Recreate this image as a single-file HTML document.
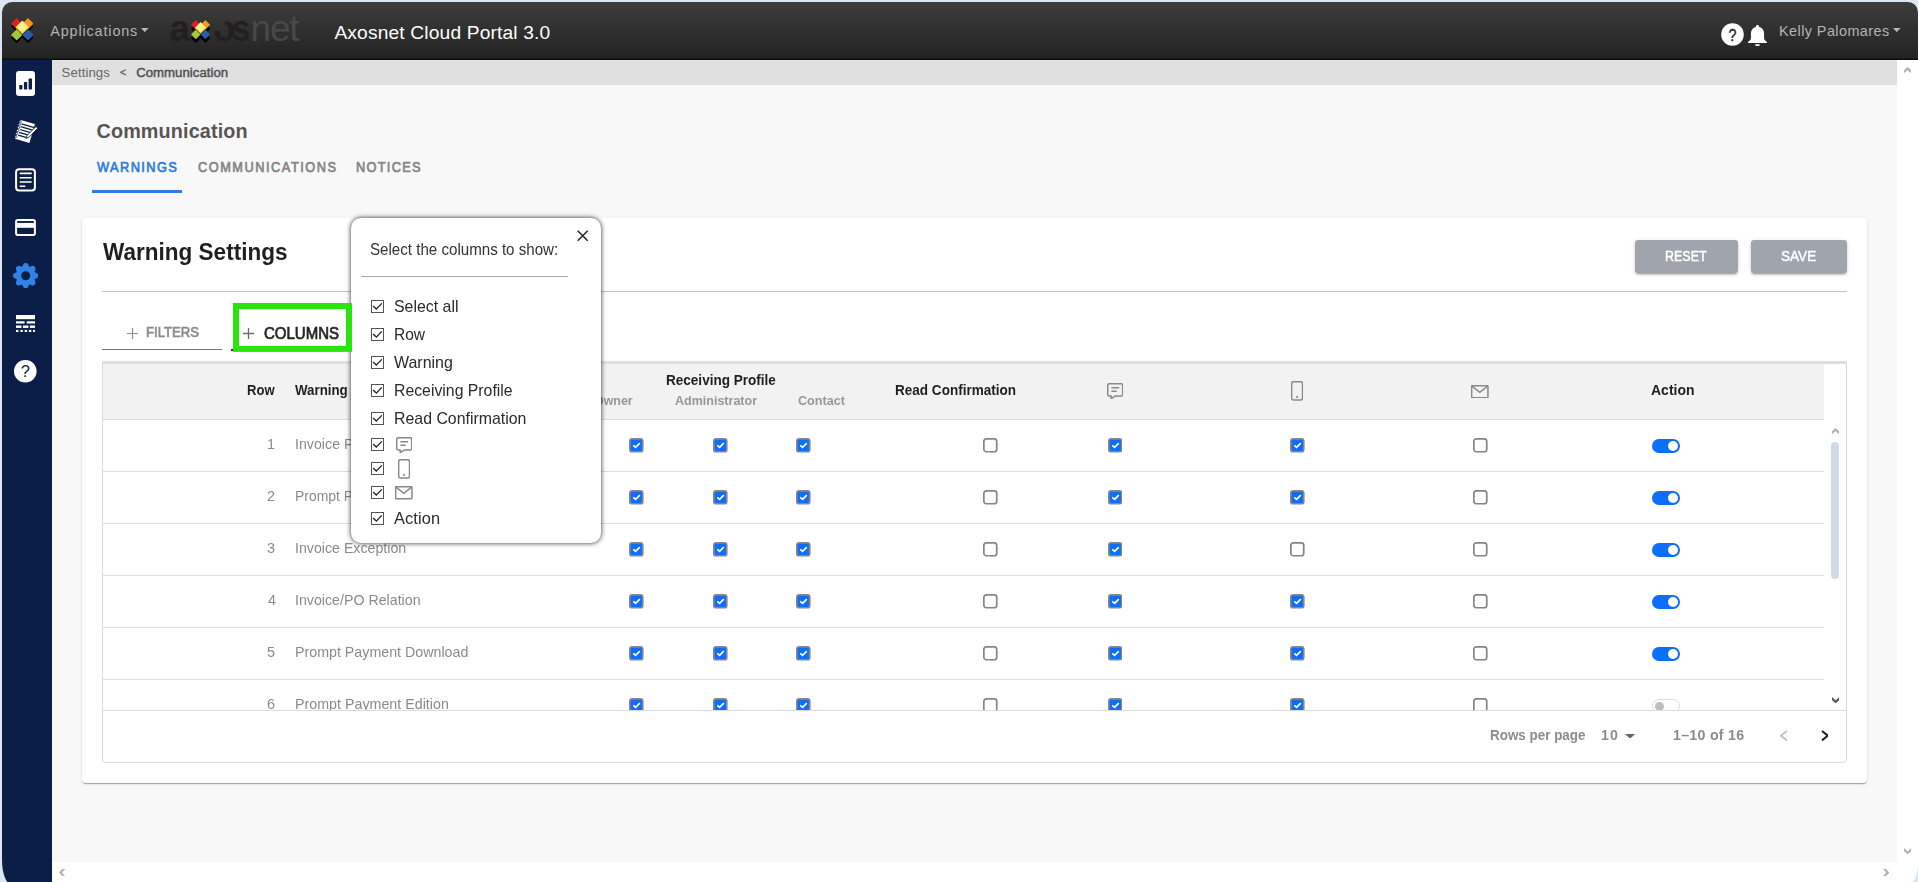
<!DOCTYPE html>
<html lang="en">
<head>
<meta charset="utf-8">
<title>Axosnet Cloud Portal 3.0</title>
<style>
*{box-sizing:border-box;margin:0;padding:0}
html,body{width:1918px;height:882px;overflow:hidden;background:#dce6f2;font-family:"Liberation Sans",sans-serif}
#win{position:absolute;left:2px;top:2px;width:1916px;height:882px;border-radius:10px 10px 9px 9px/10px 10px 24px 24px;overflow:hidden;background:#f8f8f8}
#page{position:absolute;left:-2px;top:-2px;width:1918px;height:882px}
.abs{position:absolute}
i{display:block}
#topbar{position:absolute;left:0;top:0;width:1918px;height:60px;background:linear-gradient(#3d3d3d 3%,#232323 97%,#0c0c0c 98%)}
#side{position:absolute;left:0;top:60px;width:52px;height:822px;background:#0b1e47}
#crumb{position:absolute;left:52px;top:60px;width:1845px;height:25px;background:#e0e0e0}
#vscroll{position:absolute;left:1897px;top:60px;width:21px;height:802px;background:#fff}
#hscroll{position:absolute;left:52px;top:862px;width:1866px;height:20px;background:#fff}
.t{position:absolute;white-space:nowrap;line-height:1;transform-origin:0 0}
.g{will-change:transform}
.s{display:inline-block;transform-origin:0 0}
#card{position:absolute;left:82px;top:218px;width:1785px;height:565px;background:#fff;border-radius:4px;box-shadow:0 2px 1px -1px rgba(0,0,0,.2),0 1px 1px 0 rgba(0,0,0,.14),0 1px 3px 0 rgba(0,0,0,.12)}
.btn{position:absolute;top:240px;height:32.600px;background:#a0a5ad;border-radius:3px;box-shadow:0 3px 1px -2px rgba(0,0,0,.2),0 2px 2px 0 rgba(0,0,0,.14),0 1px 5px 0 rgba(0,0,0,.12)}
#tbl{position:absolute;left:102px;top:361px;width:1745px;height:402px;border:1px solid #dcdcdc;border-radius:4px;background:#fff}
#thead{position:absolute;left:102px;top:361px;width:1722px;height:59px;background:#f2f2f2;border-top:3px solid #e0e0e0;border-bottom:1px solid #dcdcdc;border-left:1px solid #dcdcdc}
#tfoot{position:absolute;left:103px;top:710px;width:1743px;height:1px;background:#dcdcdc}
.hl{position:absolute;left:103px;width:1721px;height:1px;background:#dcdcdc}
#tbody{position:absolute;left:0;top:0;width:1918px;height:710px;overflow:hidden}
.sw{position:absolute;width:28px;height:14px;border-radius:7px;background:#0d6efd}
.sw::after{content:"";position:absolute;right:2px;top:2px;width:10px;height:10px;border-radius:50%;background:#fff}
.sw.off{background:#fff;border:1px solid #dcdcdc}
.sw.off::after{right:auto;left:1.500px;top:1.500px;width:9px;height:9px;background:#bdbdbd}
#pop{position:absolute;left:351px;top:217.700px;width:250px;height:325.300px;background:#fff;border-radius:10px;box-shadow:0 0 5px rgba(0,0,0,.85)}
</style>
</head>
<body>
<div id="win">
<div id="page">
<div id="topbar"></div>
<div id="side"></div>
<div id="crumb"></div>
<div id="vscroll"></div>
<div id="hscroll"></div>
<svg class="abs" style="left:10.8px;top:17.8px" width="22.6" height="25.31" viewBox="0 0 100 112">
<g transform="translate(0,12)"><path d="M25 0 50 25 75 0 100 25 75 50 100 75 75 100 50 75 25 100 0 75 25 50 0 25Z" fill="#000"/></g>
<path d="M25 0 50 25 25 50 0 25Z" fill="#dd1f26"/><path d="M75 0 100 25 75 50 50 25Z" fill="#f6961d"/>
<path d="M25 50 50 75 25 100 0 75Z" fill="#a3c83a"/><path d="M75 50 100 75 75 100 50 75Z" fill="#2a5caa"/>
<path d="M50 12 80 42 50 72 20 42Z" fill="#f3d630"/><path d="M50 12 76 38 50 62 24 38Z" fill="#fdf08a"/>
</svg>
<span class="t" style="left:50.3px;top:23.8px;font-size:14.4px;letter-spacing:0.855px;color:#b4b4b4">Applications</span>
<svg class="abs" style="left:141px;top:28px" width="7.6" height="4.2" viewBox="0 0 7.6 4.2"><path d="M0 0H7.6L3.8 4.2Z" fill="#b4b4b4"/></svg>
<span class="t" style="left:169.5px;top:9.5px;font-size:37px;font-weight:700;color:#231f20;letter-spacing:-1px">a</span>
<svg class="abs" style="left:190.8px;top:19.9px" width="19.2" height="23.04" viewBox="0 0 100 120">
<g transform="translate(0,20)"><path d="M25 0 50 25 75 0 100 25 75 50 100 75 75 100 50 75 25 100 0 75 25 50 0 25Z" fill="#000"/></g>
<path d="M25 0 50 25 25 50 0 25Z" fill="#dd1f26"/><path d="M75 0 100 25 75 50 50 25Z" fill="#f6961d"/>
<path d="M25 50 50 75 25 100 0 75Z" fill="#a3c83a"/><path d="M75 50 100 75 75 100 50 75Z" fill="#2a5caa"/>
<path d="M50 12 80 42 50 72 20 42Z" fill="#f3d630"/><path d="M50 12 76 38 50 62 24 38Z" fill="#fdf08a"/>
</svg>
<span class="t" style="left:213px;top:9.500px;font-size:37px;font-weight:700;color:#231f20;clip-path:polygon(0 58%,52% 58%,52% 0,100% 0,100% 100%,0 100%)">o</span>
<span class="t" style="left:231.500px;top:9.500px;font-size:37px;font-weight:700;color:#231f20;transform:scaleX(.88)">s</span>
<span class="t" style="left:250.5px;top:9.5px;font-size:37px;color:#4a4747;letter-spacing:-1.2px">net</span>
<span class="t" style="left:334.4px;top:22.9px;font-size:19.2px;letter-spacing:0.157px;color:#ffffff">Axosnet Cloud Portal 3.0</span>
<svg class="abs" style="left:1721px;top:23px" width="23" height="23" viewBox="0 0 23 23"><circle cx="11.5" cy="11.5" r="11.3" fill="#fff"/><text x="11.500" y="17.700" text-anchor="middle" transform="translate(11.500 0) scale(.84 1) translate(-11.500 0)" font-family="Liberation Sans,sans-serif" font-size="17" fill="#222" stroke="#222" stroke-width=".35">?</text></svg>
<svg class="abs" style="left:1748.100px;top:24.700px" width="19" height="21.600" viewBox="0.700 0.600 17.600 20.500" preserveAspectRatio="none"><path d="M9.5 0.6c.9 0 1.5.6 1.5 1.4v.5c2.9.7 4.6 3.1 4.6 6.2v4.3c0 1.2.7 2.3 1.9 3.1.5.3.8.6.8 1v.5H.7v-.5c0-.4.3-.7.8-1 1.200-.8 1.900-1.900 1.900-3.100V8.700c0-3.100 1.700-5.500 4.600-6.200V2c0-.8.600-1.400 1.500-1.400z" fill="#fff"/><path d="M7.300 18.800h4.400c0 1.300-1 2.300-2.200 2.300s-2.200-1-2.200-2.300z" fill="#fff"/></svg>
<span class="t" style="left:1779px;top:23.8px;font-size:14.4px;letter-spacing:0.443px;color:#b4b4b4">Kelly Palomares</span>
<svg class="abs" style="left:1893.4px;top:28px" width="7.6" height="4.2" viewBox="0 0 7.6 4.2"><path d="M0 0H7.6L3.8 4.2Z" fill="#b4b4b4"/></svg>
<svg class="abs" style="left:16px;top:71px" width="19" height="25" viewBox="0 0 19 25"><rect width="19" height="25" rx="3" fill="#fff"/><rect x="3.2" y="14" width="3.2" height="4.6" rx=".8" fill="#0b1e47"/><rect x="7.9" y="11" width="3.3" height="7.6" rx=".8" fill="#0b1e47"/><rect x="12.6" y="7.6" width="3.4" height="11" rx=".8" fill="#0b1e47"/></svg><svg class="abs" style="left:13px;top:119px" width="25" height="25" viewBox="0 0 25 25"><g transform="rotate(16 12 12)"><rect x="4.6" y="2.6" width="15" height="19.6" fill="#fff"/><g stroke="#0b1e47" stroke-width="1.25"><path d="M6.6 6.2h13.4M6.6 9.1h13.4M6.6 12h13.4M6.6 14.900h10M6.600 17.800h8"/></g><g fill="#fff" stroke="#0b1e47" stroke-width=".7"><circle cx="4.800" cy="4.600" r="1.100"/><circle cx="4.800" cy="7.600" r="1.100"/><circle cx="4.800" cy="10.600" r="1.100"/><circle cx="4.800" cy="13.600" r="1.100"/><circle cx="4.800" cy="16.600" r="1.100"/><circle cx="4.800" cy="19.600" r="1.100"/></g></g><path d="M23 7.400 14.200 16.300l-1.300 3.100 3.100-1.200L24.700 9.300z" fill="#fff" stroke="#0b1e47" stroke-width=".9"/></svg><svg class="abs" style="left:15px;top:167.800px" width="21" height="24" viewBox="0 0 21 24"><rect x="1.100" y="1.200" width="18.800" height="21.200" rx="3" fill="none" stroke="#fff" stroke-width="2"/><path d="M5.300 5.400h10.800M5.300 9.700h10.800M5.300 14h10.800M5.300 18.300h4.400" stroke="#fff" stroke-width="1.600" stroke-linecap="round"/></svg><svg class="abs" style="left:15px;top:219px" width="21" height="17" viewBox="0 0 21 17"><rect x="1.100" y="1" width="18.800" height="15" rx="1.800" fill="none" stroke="#fff" stroke-width="2"/><rect x="1" y="3.900" width="19" height="4.900" fill="#fff"/></svg><svg class="abs" style="left:12.800px;top:262.800px" width="25.400" height="25.400" viewBox="0 0 25.400 25.400"><path d="M9.70 4.96 L11.90 1.23 L13.50 1.23 L15.70 4.96 L16.05 5.11 L20.24 4.02 L21.38 5.16 L20.29 9.35 L20.44 9.70 L24.17 11.90 L24.17 13.50 L20.44 15.70 L20.29 16.05 L21.38 20.24 L20.24 21.38 L16.05 20.29 L15.70 20.44 L13.50 24.17 L11.90 24.17 L9.70 20.44 L9.35 20.29 L5.16 21.38 L4.02 20.24 L5.11 16.05 L4.96 15.70 L1.23 13.50 L1.23 11.90 L4.96 9.70 L5.11 9.35 L4.02 5.16 L5.16 4.02 L9.35 5.11Z" fill="#3282e6" stroke="#3282e6" stroke-width="2.400" stroke-linejoin="round"/><circle cx="12.7" cy="12.7" r="4.500" fill="#0b1e47"/></svg><svg class="abs" style="left:15.800px;top:315px" width="19.500" height="17" viewBox="0 0 19.500 17"><rect x="0" y="0" width="19.5" height="4.2" fill="#fff"/><rect x="0" y="6.3" width="8.6" height="2.2" fill="#fff"/><rect x="10.7" y="6.3" width="8.8" height="2.2" fill="#fff"/><rect x="0" y="10.5" width="5.5" height="2.4" fill="#fff"/><rect x="7" y="10.5" width="5.4" height="2.4" fill="#fff"/><rect x="13.9" y="10.5" width="5.6" height="2.4" fill="#fff"/><rect x="0" y="14.9" width="2.4" height="2.1" fill="#fff"/><rect x="4.4" y="14.9" width="2.4" height="2.1" fill="#fff"/><rect x="8.7" y="14.9" width="2.4" height="2.1" fill="#fff"/><rect x="12.9" y="14.9" width="2.4" height="2.1" fill="#fff"/><rect x="17.1" y="14.9" width="2.4" height="2.1" fill="#fff"/></svg><svg class="abs" style="left:14.200px;top:360.200px" width="22.600" height="22.600" viewBox="0 0 22.600 22.600"><circle cx="11.300" cy="11.300" r="11.300" fill="#fff"/><text x="11.300" y="17.300" text-anchor="middle" font-family="Liberation Sans,sans-serif" font-size="16.500" fill="#0b1e47">?</text></svg>
<span class="t" style="left:61.6px;top:65.7px;font-size:13.2px;letter-spacing:0.086px;color:#666666">Settings</span>
<span class="t" style="left:119.9px;top:67.3px;font-size:10.6px;font-weight:400;-webkit-text-stroke:.45px;color:#666666">&lt;</span>
<span class="t" style="left:136.2px;top:65.7px;font-size:13.2px;font-weight:400;-webkit-text-stroke:.45px;letter-spacing:0.025px;color:#505050">Communication</span>
<svg class="abs" style="left:1903.8px;top:67px" width="7.3" height="6.2" viewBox="0 0 7.3 6.2"><path d="M0.00 6.20L3.65 2.90L7.30 6.20L7.30 3.30L3.65 0.00L0.00 3.30Z" fill="#b0b0b0"/></svg><svg class="abs" style="left:1903.9px;top:847.7px" width="7.3" height="6.3" viewBox="0 0 7.3 6.3"><path d="M0.00 0.00L3.65 3.40L7.30 0.00L7.30 2.90L3.65 6.30L0.00 2.90Z" fill="#b0b0b0"/></svg><svg class="abs" style="left:59px;top:869px" width="6.3" height="7.2" viewBox="0 0 6.3 7.2"><path d="M6.30 0.00L2.90 3.60L6.30 7.20L3.40 7.20L0.00 3.60L3.40 0.00Z" fill="#b0b0b0"/></svg><svg class="abs" style="left:1882.7px;top:869px" width="6.3" height="7.2" viewBox="0 0 6.3 7.2"><path d="M0.00 0.00L3.40 3.60L0.00 7.20L2.90 7.20L6.30 3.60L2.90 0.00Z" fill="#b0b0b0"/></svg>
<span class="t" style="left:96.5px;top:122.1px;font-size:19.8px;font-weight:700;letter-spacing:0.133px;color:#595553">Communication</span>
<span class="t" style="left:97.3px;top:159.9px;font-size:14.2px;font-weight:400;-webkit-text-stroke:.7px;letter-spacing:1.603px;transform:scaleX(0.9);color:#2f7de1">WARNINGS</span>
<span class="t" style="left:197.9px;top:159.9px;font-size:14.2px;font-weight:400;-webkit-text-stroke:.7px;letter-spacing:1.692px;transform:scaleX(0.9);color:#858585">COMMUNICATIONS</span>
<span class="t" style="left:355.5px;top:159.9px;font-size:14.2px;font-weight:400;-webkit-text-stroke:.7px;letter-spacing:1.444px;transform:scaleX(0.9);color:#858585">NOTICES</span>
<div class="abs" style="left:92px;top:190px;width:90px;height:3px;background:#2f7de1"></div>
<div id="card"></div>
<span class="t g" style="left:102.7px;top:240px;font-size:24.6px;font-weight:700;color:#1f1f1f"><span class="s" style="transform:scaleX(0.9165)">Warning Settings</span></span>
<div class="btn" style="left:1635px;width:103px"></div><div class="btn" style="left:1751px;width:96px"></div>
<span class="t g" style="left:1664.8px;top:249px;font-size:14.4px;font-weight:400;-webkit-text-stroke:.45px;color:#ffffff"><span class="s" style="transform:scaleX(0.8681)">RESET</span></span>
<span class="t g" style="left:1781px;top:249px;font-size:14.4px;font-weight:400;-webkit-text-stroke:.45px;color:#ffffff"><span class="s" style="transform:scaleX(0.9444)">SAVE</span></span>
<div class="abs" style="left:102px;top:290.5px;width:1745px;height:1px;background:#c4c4c4"></div>
<svg class="abs" style="left:126.6px;top:328.4px" width="11" height="11" viewBox="0 0 11 11"><path d="M5.5 0v11M0 5.500h11" stroke="#8c8c8c" stroke-width="1.2"/></svg>
<span class="t g" style="left:145.9px;top:324.9px;font-size:14px;font-weight:400;-webkit-text-stroke:.7px;color:#8c8c8c"><span class="s" style="transform:scaleX(0.9382)">FILTERS</span></span>
<div class="abs" style="left:102px;top:349px;width:120px;height:1px;background:#7a7a7a"></div>
<div class="abs" style="left:230.8px;top:349.1px;width:4px;height:1.8px;background:#333"></div>
<svg class="abs" style="left:243.200px;top:327.500px" width="11" height="11" viewBox="0 0 11 11"><path d="M5.500 0v11M0 5.500h11" stroke="#6a6a6a" stroke-width="1.300"/></svg>
<span class="t g" style="left:263.9px;top:324.6px;font-size:16.4px;font-weight:400;-webkit-text-stroke:.7px;color:#262626"><span class="s" style="transform:scaleX(0.9146)">COLUMNS</span></span>
<div id="tbl"></div><div id="thead"></div><div class="abs" style="left:102px;top:361px;width:1745px;height:3px;background:#dfdfdf"></div><div id="tfoot"></div>
<div class="hl" style="top:471px"></div><div class="hl" style="top:523px"></div><div class="hl" style="top:575px"></div><div class="hl" style="top:627px"></div><div class="hl" style="top:679px"></div>
<span class="t g" style="left:246.6px;top:383px;font-size:14.2px;font-weight:700;color:#1f1f1f"><span class="s" style="transform:scaleX(0.9207)">Row</span></span>
<span class="t g" style="left:295.3px;top:383px;font-size:14.2px;font-weight:700;color:#1f1f1f"><span class="s" style="transform:scaleX(0.9382)">Warning</span></span>
<span class="t g" style="left:665.5px;top:373.4px;font-size:14.2px;font-weight:700;color:#1f1f1f"><span class="s" style="transform:scaleX(0.9544)">Receiving Profile</span></span>
<span class="t g" style="left:594.3px;top:394px;font-size:13.2px;font-weight:700;color:#979797"><span class="s" style="transform:scaleX(0.9425)">Owner</span></span>
<span class="t g" style="left:675.3px;top:394px;font-size:13.2px;font-weight:700;color:#979797"><span class="s" style="transform:scaleX(0.9488)">Administrator</span></span>
<span class="t g" style="left:797.8px;top:394px;font-size:13.2px;font-weight:700;color:#979797"><span class="s" style="transform:scaleX(0.9563)">Contact</span></span>
<span class="t g" style="left:895px;top:383px;font-size:14.2px;font-weight:700;color:#1f1f1f"><span class="s" style="transform:scaleX(0.9544)">Read Confirmation</span></span>
<span class="t g" style="left:1651px;top:383px;font-size:14.2px;font-weight:700;color:#1f1f1f"><span class="s" style="transform:scaleX(0.9857)">Action</span></span>
<svg class="abs" style="left:1106.5px;top:382.5px" width="16.400" height="16.200" viewBox="0 0 16.400 16.200"><path d="M.7 2.200a1.500 1.500 0 0 1 1.500-1.500h12a1.500 1.500 0 0 1 1.500 1.500v9.300a1.500 1.500 0 0 1-1.500 1.500H8.500l-4.300 2.700v-2.700H2.200a1.500 1.500 0 0 1-1.500-1.500z" fill="none" stroke="#898989" stroke-width="1.500" stroke-linejoin="round"/><path d="M4.400 4.800h7.800M4.400 8.300h5.300" stroke="#898989" stroke-width="1.500"/></svg><svg class="abs" style="left:1291.2px;top:381px" width="12.200" height="19.700" viewBox="0 0 12.200 19.700"><rect x=".650" y=".650" width="10.900" height="18.400" rx="2" fill="none" stroke="#898989" stroke-width="1.500"/><circle cx="6.100" cy="15.900" r="1.050" fill="#898989"/></svg><svg class="abs" style="left:1471px;top:384.5px" width="17.600" height="13.500" viewBox="0 0 17.600 13.500"><rect x=".650" y=".650" width="16.300" height="12.200" rx=".8" fill="none" stroke="#898989" stroke-width="1.500"/><path d="M1 1.200l7.800 6.100 7.800-6.100" fill="none" stroke="#898989" stroke-width="1.500"/></svg>
<div id="tbody">
<span class="t g" style="left:266.8px;top:437.0px;font-size:14.4px;color:#8a8a8a">1</span>
<span class="t g" style="left:294.8px;top:437.0px;font-size:14.4px;color:#8a8a8a"><span class="s" style="transform:scaleX(0.9876)">Invoice Payment</span></span>
<svg class="abs" style="left:629.2px;top:438.2px" width="14.600" height="14.600" viewBox="0 0 14.600 14.600"><rect width="14.600" height="14.600" rx="3.200" fill="#8a8682"/><rect x="1.700" y="1.700" width="11.200" height="11.200" rx="1.500" fill="#0d6efd"/><path d="M4.300 7.300l2.300 2.100 4.200-4.200" fill="none" stroke="#fff" stroke-width="1.700"/></svg><svg class="abs" style="left:713.2px;top:438.2px" width="14.600" height="14.600" viewBox="0 0 14.600 14.600"><rect width="14.600" height="14.600" rx="3.200" fill="#8a8682"/><rect x="1.700" y="1.700" width="11.200" height="11.200" rx="1.500" fill="#0d6efd"/><path d="M4.300 7.300l2.300 2.100 4.200-4.200" fill="none" stroke="#fff" stroke-width="1.700"/></svg><svg class="abs" style="left:796.1px;top:438.2px" width="14.600" height="14.600" viewBox="0 0 14.600 14.600"><rect width="14.600" height="14.600" rx="3.200" fill="#8a8682"/><rect x="1.700" y="1.700" width="11.200" height="11.200" rx="1.500" fill="#0d6efd"/><path d="M4.300 7.300l2.300 2.100 4.200-4.200" fill="none" stroke="#fff" stroke-width="1.700"/></svg><svg class="abs" style="left:983.2px;top:438.2px" width="14.600" height="14.600" viewBox="0 0 14.600 14.600"><rect x=".850" y=".850" width="12.900" height="12.900" rx="2.500" fill="#fff" stroke="#858585" stroke-width="1.700"/></svg><svg class="abs" style="left:1107.7px;top:438.2px" width="14.600" height="14.600" viewBox="0 0 14.600 14.600"><rect width="14.600" height="14.600" rx="3.200" fill="#8a8682"/><rect x="1.700" y="1.700" width="11.200" height="11.200" rx="1.500" fill="#0d6efd"/><path d="M4.300 7.300l2.300 2.100 4.200-4.200" fill="none" stroke="#fff" stroke-width="1.700"/></svg><svg class="abs" style="left:1290.0px;top:438.2px" width="14.600" height="14.600" viewBox="0 0 14.600 14.600"><rect width="14.600" height="14.600" rx="3.200" fill="#8a8682"/><rect x="1.700" y="1.700" width="11.200" height="11.200" rx="1.500" fill="#0d6efd"/><path d="M4.300 7.300l2.300 2.100 4.200-4.200" fill="none" stroke="#fff" stroke-width="1.700"/></svg><svg class="abs" style="left:1473.1px;top:438.2px" width="14.600" height="14.600" viewBox="0 0 14.600 14.600"><rect x=".850" y=".850" width="12.900" height="12.900" rx="2.500" fill="#fff" stroke="#858585" stroke-width="1.700"/></svg><i class="sw" style="left:1652px;top:439.0px"></i>
<span class="t g" style="left:266.8px;top:489.0px;font-size:14.4px;color:#8a8a8a">2</span>
<span class="t g" style="left:294.8px;top:489.0px;font-size:14.4px;color:#8a8a8a"><span class="s" style="transform:scaleX(0.9689)">Prompt Payment</span></span>
<svg class="abs" style="left:629.2px;top:490.2px" width="14.600" height="14.600" viewBox="0 0 14.600 14.600"><rect width="14.600" height="14.600" rx="3.200" fill="#8a8682"/><rect x="1.700" y="1.700" width="11.200" height="11.200" rx="1.500" fill="#0d6efd"/><path d="M4.300 7.300l2.300 2.100 4.200-4.200" fill="none" stroke="#fff" stroke-width="1.700"/></svg><svg class="abs" style="left:713.2px;top:490.2px" width="14.600" height="14.600" viewBox="0 0 14.600 14.600"><rect width="14.600" height="14.600" rx="3.200" fill="#8a8682"/><rect x="1.700" y="1.700" width="11.200" height="11.200" rx="1.500" fill="#0d6efd"/><path d="M4.300 7.300l2.300 2.100 4.200-4.200" fill="none" stroke="#fff" stroke-width="1.700"/></svg><svg class="abs" style="left:796.1px;top:490.2px" width="14.600" height="14.600" viewBox="0 0 14.600 14.600"><rect width="14.600" height="14.600" rx="3.200" fill="#8a8682"/><rect x="1.700" y="1.700" width="11.200" height="11.200" rx="1.500" fill="#0d6efd"/><path d="M4.300 7.300l2.300 2.100 4.200-4.200" fill="none" stroke="#fff" stroke-width="1.700"/></svg><svg class="abs" style="left:983.2px;top:490.2px" width="14.600" height="14.600" viewBox="0 0 14.600 14.600"><rect x=".850" y=".850" width="12.900" height="12.900" rx="2.500" fill="#fff" stroke="#858585" stroke-width="1.700"/></svg><svg class="abs" style="left:1107.7px;top:490.2px" width="14.600" height="14.600" viewBox="0 0 14.600 14.600"><rect width="14.600" height="14.600" rx="3.200" fill="#8a8682"/><rect x="1.700" y="1.700" width="11.200" height="11.200" rx="1.500" fill="#0d6efd"/><path d="M4.300 7.300l2.300 2.100 4.200-4.200" fill="none" stroke="#fff" stroke-width="1.700"/></svg><svg class="abs" style="left:1290.0px;top:490.2px" width="14.600" height="14.600" viewBox="0 0 14.600 14.600"><rect width="14.600" height="14.600" rx="3.200" fill="#8a8682"/><rect x="1.700" y="1.700" width="11.200" height="11.200" rx="1.500" fill="#0d6efd"/><path d="M4.300 7.300l2.300 2.100 4.200-4.200" fill="none" stroke="#fff" stroke-width="1.700"/></svg><svg class="abs" style="left:1473.1px;top:490.2px" width="14.600" height="14.600" viewBox="0 0 14.600 14.600"><rect x=".850" y=".850" width="12.900" height="12.900" rx="2.500" fill="#fff" stroke="#858585" stroke-width="1.700"/></svg><i class="sw" style="left:1652px;top:491.0px"></i>
<span class="t g" style="left:266.8px;top:541.0px;font-size:14.4px;color:#8a8a8a">3</span>
<span class="t g" style="left:294.8px;top:541.0px;font-size:14.4px;color:#8a8a8a"><span class="s" style="transform:scaleX(0.9856)">Invoice Exception</span></span>
<svg class="abs" style="left:629.2px;top:542.2px" width="14.600" height="14.600" viewBox="0 0 14.600 14.600"><rect width="14.600" height="14.600" rx="3.200" fill="#8a8682"/><rect x="1.700" y="1.700" width="11.200" height="11.200" rx="1.500" fill="#0d6efd"/><path d="M4.300 7.300l2.300 2.100 4.200-4.200" fill="none" stroke="#fff" stroke-width="1.700"/></svg><svg class="abs" style="left:713.2px;top:542.2px" width="14.600" height="14.600" viewBox="0 0 14.600 14.600"><rect width="14.600" height="14.600" rx="3.200" fill="#8a8682"/><rect x="1.700" y="1.700" width="11.200" height="11.200" rx="1.500" fill="#0d6efd"/><path d="M4.300 7.300l2.300 2.100 4.200-4.200" fill="none" stroke="#fff" stroke-width="1.700"/></svg><svg class="abs" style="left:796.1px;top:542.2px" width="14.600" height="14.600" viewBox="0 0 14.600 14.600"><rect width="14.600" height="14.600" rx="3.200" fill="#8a8682"/><rect x="1.700" y="1.700" width="11.200" height="11.200" rx="1.500" fill="#0d6efd"/><path d="M4.300 7.300l2.300 2.100 4.200-4.200" fill="none" stroke="#fff" stroke-width="1.700"/></svg><svg class="abs" style="left:983.2px;top:542.2px" width="14.600" height="14.600" viewBox="0 0 14.600 14.600"><rect x=".850" y=".850" width="12.900" height="12.900" rx="2.500" fill="#fff" stroke="#858585" stroke-width="1.700"/></svg><svg class="abs" style="left:1107.7px;top:542.2px" width="14.600" height="14.600" viewBox="0 0 14.600 14.600"><rect width="14.600" height="14.600" rx="3.200" fill="#8a8682"/><rect x="1.700" y="1.700" width="11.200" height="11.200" rx="1.500" fill="#0d6efd"/><path d="M4.300 7.300l2.300 2.100 4.200-4.200" fill="none" stroke="#fff" stroke-width="1.700"/></svg><svg class="abs" style="left:1290.0px;top:542.2px" width="14.600" height="14.600" viewBox="0 0 14.600 14.600"><rect x=".850" y=".850" width="12.900" height="12.900" rx="2.500" fill="#fff" stroke="#858585" stroke-width="1.700"/></svg><svg class="abs" style="left:1473.1px;top:542.2px" width="14.600" height="14.600" viewBox="0 0 14.600 14.600"><rect x=".850" y=".850" width="12.900" height="12.900" rx="2.500" fill="#fff" stroke="#858585" stroke-width="1.700"/></svg><i class="sw" style="left:1652px;top:543.0px"></i>
<span class="t g" style="left:267.8px;top:593.0px;font-size:14.4px;color:#8a8a8a">4</span>
<span class="t g" style="left:294.8px;top:593.0px;font-size:14.4px;color:#8a8a8a"><span class="s" style="transform:scaleX(0.9872)">Invoice/PO Relation</span></span>
<svg class="abs" style="left:629.2px;top:594.2px" width="14.600" height="14.600" viewBox="0 0 14.600 14.600"><rect width="14.600" height="14.600" rx="3.200" fill="#8a8682"/><rect x="1.700" y="1.700" width="11.200" height="11.200" rx="1.500" fill="#0d6efd"/><path d="M4.300 7.300l2.300 2.100 4.200-4.200" fill="none" stroke="#fff" stroke-width="1.700"/></svg><svg class="abs" style="left:713.2px;top:594.2px" width="14.600" height="14.600" viewBox="0 0 14.600 14.600"><rect width="14.600" height="14.600" rx="3.200" fill="#8a8682"/><rect x="1.700" y="1.700" width="11.200" height="11.200" rx="1.500" fill="#0d6efd"/><path d="M4.300 7.300l2.300 2.100 4.200-4.200" fill="none" stroke="#fff" stroke-width="1.700"/></svg><svg class="abs" style="left:796.1px;top:594.2px" width="14.600" height="14.600" viewBox="0 0 14.600 14.600"><rect width="14.600" height="14.600" rx="3.200" fill="#8a8682"/><rect x="1.700" y="1.700" width="11.200" height="11.200" rx="1.500" fill="#0d6efd"/><path d="M4.300 7.300l2.300 2.100 4.200-4.200" fill="none" stroke="#fff" stroke-width="1.700"/></svg><svg class="abs" style="left:983.2px;top:594.2px" width="14.600" height="14.600" viewBox="0 0 14.600 14.600"><rect x=".850" y=".850" width="12.900" height="12.900" rx="2.500" fill="#fff" stroke="#858585" stroke-width="1.700"/></svg><svg class="abs" style="left:1107.7px;top:594.2px" width="14.600" height="14.600" viewBox="0 0 14.600 14.600"><rect width="14.600" height="14.600" rx="3.200" fill="#8a8682"/><rect x="1.700" y="1.700" width="11.200" height="11.200" rx="1.500" fill="#0d6efd"/><path d="M4.300 7.300l2.300 2.100 4.200-4.200" fill="none" stroke="#fff" stroke-width="1.700"/></svg><svg class="abs" style="left:1290.0px;top:594.2px" width="14.600" height="14.600" viewBox="0 0 14.600 14.600"><rect width="14.600" height="14.600" rx="3.200" fill="#8a8682"/><rect x="1.700" y="1.700" width="11.200" height="11.200" rx="1.500" fill="#0d6efd"/><path d="M4.300 7.300l2.300 2.100 4.200-4.200" fill="none" stroke="#fff" stroke-width="1.700"/></svg><svg class="abs" style="left:1473.1px;top:594.2px" width="14.600" height="14.600" viewBox="0 0 14.600 14.600"><rect x=".850" y=".850" width="12.900" height="12.900" rx="2.500" fill="#fff" stroke="#858585" stroke-width="1.700"/></svg><i class="sw" style="left:1652px;top:595.0px"></i>
<span class="t g" style="left:266.8px;top:645.0px;font-size:14.4px;color:#8a8a8a">5</span>
<span class="t g" style="left:294.8px;top:645.0px;font-size:14.4px;color:#8a8a8a"><span class="s" style="transform:scaleX(0.9896)">Prompt Payment Download</span></span>
<svg class="abs" style="left:629.2px;top:646.2px" width="14.600" height="14.600" viewBox="0 0 14.600 14.600"><rect width="14.600" height="14.600" rx="3.200" fill="#8a8682"/><rect x="1.700" y="1.700" width="11.200" height="11.200" rx="1.500" fill="#0d6efd"/><path d="M4.300 7.300l2.300 2.100 4.200-4.200" fill="none" stroke="#fff" stroke-width="1.700"/></svg><svg class="abs" style="left:713.2px;top:646.2px" width="14.600" height="14.600" viewBox="0 0 14.600 14.600"><rect width="14.600" height="14.600" rx="3.200" fill="#8a8682"/><rect x="1.700" y="1.700" width="11.200" height="11.200" rx="1.500" fill="#0d6efd"/><path d="M4.300 7.300l2.300 2.100 4.200-4.200" fill="none" stroke="#fff" stroke-width="1.700"/></svg><svg class="abs" style="left:796.1px;top:646.2px" width="14.600" height="14.600" viewBox="0 0 14.600 14.600"><rect width="14.600" height="14.600" rx="3.200" fill="#8a8682"/><rect x="1.700" y="1.700" width="11.200" height="11.200" rx="1.500" fill="#0d6efd"/><path d="M4.300 7.300l2.300 2.100 4.200-4.200" fill="none" stroke="#fff" stroke-width="1.700"/></svg><svg class="abs" style="left:983.2px;top:646.2px" width="14.600" height="14.600" viewBox="0 0 14.600 14.600"><rect x=".850" y=".850" width="12.900" height="12.900" rx="2.500" fill="#fff" stroke="#858585" stroke-width="1.700"/></svg><svg class="abs" style="left:1107.7px;top:646.2px" width="14.600" height="14.600" viewBox="0 0 14.600 14.600"><rect width="14.600" height="14.600" rx="3.200" fill="#8a8682"/><rect x="1.700" y="1.700" width="11.200" height="11.200" rx="1.500" fill="#0d6efd"/><path d="M4.300 7.300l2.300 2.100 4.200-4.200" fill="none" stroke="#fff" stroke-width="1.700"/></svg><svg class="abs" style="left:1290.0px;top:646.2px" width="14.600" height="14.600" viewBox="0 0 14.600 14.600"><rect width="14.600" height="14.600" rx="3.200" fill="#8a8682"/><rect x="1.700" y="1.700" width="11.200" height="11.200" rx="1.500" fill="#0d6efd"/><path d="M4.300 7.300l2.300 2.100 4.200-4.200" fill="none" stroke="#fff" stroke-width="1.700"/></svg><svg class="abs" style="left:1473.1px;top:646.2px" width="14.600" height="14.600" viewBox="0 0 14.600 14.600"><rect x=".850" y=".850" width="12.900" height="12.900" rx="2.500" fill="#fff" stroke="#858585" stroke-width="1.700"/></svg><i class="sw" style="left:1652px;top:647.0px"></i>
<span class="t g" style="left:266.8px;top:697.0px;font-size:14.4px;color:#8a8a8a">6</span>
<span class="t g" style="left:294.8px;top:697.0px;font-size:14.4px;color:#8a8a8a"><span class="s" style="transform:scaleX(0.9915)">Prompt Payment Edition</span></span>
<svg class="abs" style="left:629.2px;top:698.2px" width="14.600" height="14.600" viewBox="0 0 14.600 14.600"><rect width="14.600" height="14.600" rx="3.200" fill="#8a8682"/><rect x="1.700" y="1.700" width="11.200" height="11.200" rx="1.500" fill="#0d6efd"/><path d="M4.300 7.300l2.300 2.100 4.200-4.200" fill="none" stroke="#fff" stroke-width="1.700"/></svg><svg class="abs" style="left:713.2px;top:698.2px" width="14.600" height="14.600" viewBox="0 0 14.600 14.600"><rect width="14.600" height="14.600" rx="3.200" fill="#8a8682"/><rect x="1.700" y="1.700" width="11.200" height="11.200" rx="1.500" fill="#0d6efd"/><path d="M4.300 7.300l2.300 2.100 4.200-4.200" fill="none" stroke="#fff" stroke-width="1.700"/></svg><svg class="abs" style="left:796.1px;top:698.2px" width="14.600" height="14.600" viewBox="0 0 14.600 14.600"><rect width="14.600" height="14.600" rx="3.200" fill="#8a8682"/><rect x="1.700" y="1.700" width="11.200" height="11.200" rx="1.500" fill="#0d6efd"/><path d="M4.300 7.300l2.300 2.100 4.200-4.200" fill="none" stroke="#fff" stroke-width="1.700"/></svg><svg class="abs" style="left:983.2px;top:698.2px" width="14.600" height="14.600" viewBox="0 0 14.600 14.600"><rect x=".850" y=".850" width="12.900" height="12.900" rx="2.500" fill="#fff" stroke="#858585" stroke-width="1.700"/></svg><svg class="abs" style="left:1107.7px;top:698.2px" width="14.600" height="14.600" viewBox="0 0 14.600 14.600"><rect width="14.600" height="14.600" rx="3.200" fill="#8a8682"/><rect x="1.700" y="1.700" width="11.200" height="11.200" rx="1.500" fill="#0d6efd"/><path d="M4.300 7.300l2.300 2.100 4.200-4.200" fill="none" stroke="#fff" stroke-width="1.700"/></svg><svg class="abs" style="left:1290.0px;top:698.2px" width="14.600" height="14.600" viewBox="0 0 14.600 14.600"><rect width="14.600" height="14.600" rx="3.200" fill="#8a8682"/><rect x="1.700" y="1.700" width="11.200" height="11.200" rx="1.500" fill="#0d6efd"/><path d="M4.300 7.300l2.300 2.100 4.200-4.200" fill="none" stroke="#fff" stroke-width="1.700"/></svg><svg class="abs" style="left:1473.1px;top:698.2px" width="14.600" height="14.600" viewBox="0 0 14.600 14.600"><rect x=".850" y=".850" width="12.900" height="12.900" rx="2.500" fill="#fff" stroke="#858585" stroke-width="1.700"/></svg><i class="sw off" style="left:1652px;top:699.0px"></i>
</div>
<svg class="abs" style="left:1832px;top:427.9px" width="7.1" height="6.2" viewBox="0 0 7.1 6.2"><path d="M0.00 6.20L3.55 2.90L7.10 6.20L7.10 3.30L3.55 0.00L0.00 3.30Z" fill="#b0b0b0"/></svg><svg class="abs" style="left:1831.8px;top:696.8px" width="7.3" height="6.3" viewBox="0 0 7.3 6.3"><path d="M0.00 0.00L3.65 3.40L7.30 0.00L7.30 2.90L3.65 6.30L0.00 2.90Z" fill="#505050"/></svg><div class="abs" style="left:1831.100px;top:442px;width:7.900px;height:136.600px;border-radius:4px;background:#d0dae4"></div>
<span class="t g" style="left:1489.7px;top:728.2px;font-size:14.2px;font-weight:700;color:#8c8c8c"><span class="s" style="transform:scaleX(0.9465)">Rows per page</span></span>
<span class="t g" style="left:1601.2px;top:728.2px;font-size:14.2px;font-weight:700;letter-spacing:1.1px;color:#8c8c8c">10</span>
<span class="t g" style="left:1673px;top:728.2px;font-size:14.2px;font-weight:700;letter-spacing:0.278px;color:#8c8c8c">1–10 of 16</span>
<svg class="abs" style="left:1625px;top:733.8px" width="10.2" height="4.6" viewBox="0 0 10.2 4.6"><path d="M0 0H10.2L5.1 4.6Z" fill="#666"/></svg>
<svg class="abs" style="left:1779.8px;top:730px" width="7.8" height="11.4" viewBox="0 0 7.8 11.4"><path d="M6.8999999999999995 0.9 L0.9 5.7 L6.8999999999999995 10.5" fill="none" stroke="#c0c0c0" stroke-width="1.8"/></svg><svg class="abs" style="left:1820.5px;top:730px" width="7.8" height="11.4" viewBox="0 0 7.8 11.4"><path d="M1.0 1.0 L6.8 5.7 L1.0 10.4" fill="none" stroke="#1c1c1c" stroke-width="2"/></svg>
<div id="pop"></div>
<span class="t g" style="left:370px;top:240.8px;font-size:16.4px;color:#333333"><span class="s" style="transform:scaleX(0.9223)">Select the columns to show:</span></span>
<svg class="abs" style="left:577px;top:230.2px" width="11.4" height="11.4" viewBox="0 0 11.4 11.4"><path d="M.7.7l10 10M10.700.7l-10 10" stroke="#222" stroke-width="1.5"/></svg>
<div class="abs" style="left:360.5px;top:275.8px;width:207px;height:1px;background:#a8a8a8"></div>
<svg class="abs" style="left:371px;top:300px" width="13" height="13" viewBox="0 0 13 13"><rect x=".5" y=".5" width="12" height="12" fill="#fff" stroke="#555" stroke-width="1"/><path d="M2.100 6.100l3.200 3 5.500-5.700" fill="none" stroke="#222" stroke-width="1.350"/></svg><svg class="abs" style="left:371px;top:328px" width="13" height="13" viewBox="0 0 13 13"><rect x=".5" y=".5" width="12" height="12" fill="#fff" stroke="#555" stroke-width="1"/><path d="M2.100 6.100l3.200 3 5.500-5.700" fill="none" stroke="#222" stroke-width="1.350"/></svg><svg class="abs" style="left:371px;top:356px" width="13" height="13" viewBox="0 0 13 13"><rect x=".5" y=".5" width="12" height="12" fill="#fff" stroke="#555" stroke-width="1"/><path d="M2.100 6.100l3.200 3 5.500-5.700" fill="none" stroke="#222" stroke-width="1.350"/></svg><svg class="abs" style="left:371px;top:384px" width="13" height="13" viewBox="0 0 13 13"><rect x=".5" y=".5" width="12" height="12" fill="#fff" stroke="#555" stroke-width="1"/><path d="M2.100 6.100l3.200 3 5.500-5.700" fill="none" stroke="#222" stroke-width="1.350"/></svg><svg class="abs" style="left:371px;top:412px" width="13" height="13" viewBox="0 0 13 13"><rect x=".5" y=".5" width="12" height="12" fill="#fff" stroke="#555" stroke-width="1"/><path d="M2.100 6.100l3.200 3 5.500-5.700" fill="none" stroke="#222" stroke-width="1.350"/></svg><svg class="abs" style="left:371px;top:438px" width="13" height="13" viewBox="0 0 13 13"><rect x=".5" y=".5" width="12" height="12" fill="#fff" stroke="#555" stroke-width="1"/><path d="M2.100 6.100l3.200 3 5.500-5.700" fill="none" stroke="#222" stroke-width="1.350"/></svg><svg class="abs" style="left:371px;top:462px" width="13" height="13" viewBox="0 0 13 13"><rect x=".5" y=".5" width="12" height="12" fill="#fff" stroke="#555" stroke-width="1"/><path d="M2.100 6.100l3.200 3 5.500-5.700" fill="none" stroke="#222" stroke-width="1.350"/></svg><svg class="abs" style="left:371px;top:486px" width="13" height="13" viewBox="0 0 13 13"><rect x=".5" y=".5" width="12" height="12" fill="#fff" stroke="#555" stroke-width="1"/><path d="M2.100 6.100l3.200 3 5.500-5.700" fill="none" stroke="#222" stroke-width="1.350"/></svg><svg class="abs" style="left:371px;top:512px" width="13" height="13" viewBox="0 0 13 13"><rect x=".5" y=".5" width="12" height="12" fill="#fff" stroke="#555" stroke-width="1"/><path d="M2.100 6.100l3.200 3 5.500-5.700" fill="none" stroke="#222" stroke-width="1.350"/></svg>
<span class="t g" style="left:393.9px;top:298.0px;font-size:16.4px;color:#2a2a2a"><span class="s" style="transform:scaleX(0.9703)">Select all</span></span>
<span class="t g" style="left:393.9px;top:326.0px;font-size:16.4px;color:#2a2a2a"><span class="s" style="transform:scaleX(0.9469)">Row</span></span>
<span class="t g" style="left:393.9px;top:354.0px;font-size:16.4px;color:#2a2a2a"><span class="s" style="transform:scaleX(0.9746)">Warning</span></span>
<span class="t g" style="left:393.9px;top:382.0px;font-size:16.4px;color:#2a2a2a"><span class="s" style="transform:scaleX(0.9645)">Receiving Profile</span></span>
<span class="t g" style="left:393.9px;top:410.0px;font-size:16.4px;color:#2a2a2a"><span class="s" style="transform:scaleX(0.9689)">Read Confirmation</span></span>
<span class="t g" style="left:393.9px;top:510.0px;font-size:16.4px;letter-spacing:0.12px;color:#2a2a2a">Action</span>
<svg class="abs" style="left:395.8px;top:436.7px" width="16.400" height="16.200" viewBox="0 0 16.400 16.200"><path d="M.7 2.200a1.500 1.500 0 0 1 1.500-1.500h12a1.500 1.500 0 0 1 1.500 1.500v9.300a1.500 1.500 0 0 1-1.500 1.500H8.500l-4.300 2.700v-2.700H2.200a1.500 1.500 0 0 1-1.500-1.500z" fill="none" stroke="#898989" stroke-width="1.500" stroke-linejoin="round"/><path d="M4.400 4.800h7.800M4.400 8.300h5.300" stroke="#898989" stroke-width="1.500"/></svg><svg class="abs" style="left:397.9px;top:459.2px" width="12.200" height="19.700" viewBox="0 0 12.200 19.700"><rect x=".650" y=".650" width="10.900" height="18.400" rx="2" fill="none" stroke="#898989" stroke-width="1.500"/><circle cx="6.100" cy="15.900" r="1.050" fill="#898989"/></svg><svg class="abs" style="left:395.2px;top:486.3px" width="17.600" height="13.500" viewBox="0 0 17.600 13.500"><rect x=".650" y=".650" width="16.300" height="12.200" rx=".8" fill="none" stroke="#898989" stroke-width="1.500"/><path d="M1 1.200l7.800 6.100 7.800-6.100" fill="none" stroke="#898989" stroke-width="1.500"/></svg>
<svg class="abs" style="left:233px;top:302.800px" width="119" height="48.900" viewBox="0 0 119 48.900"><rect x="3" y="3" width="113" height="42.900" fill="none" stroke="#2ae40c" stroke-width="6"/></svg>
</div>
</div>
</body>
</html>
